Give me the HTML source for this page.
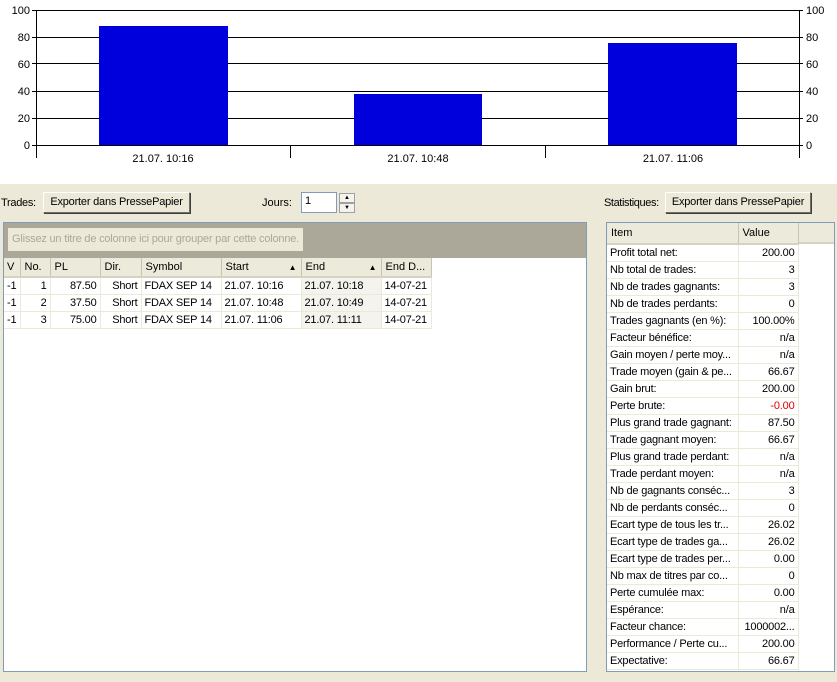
<!DOCTYPE html>
<html><head><meta charset="utf-8"><style>
*{margin:0;padding:0;box-sizing:border-box}
body{width:837px;height:682px;background:#ece9d8;font-family:"Liberation Sans",sans-serif;font-size:11px;color:#000;position:relative;overflow:hidden}
.a{position:absolute;white-space:nowrap}
.btn{position:absolute;height:21px;border-top:1px solid #fff;border-left:1px solid #fff;border-right:1px solid #716f64;border-bottom:1px solid #716f64;box-shadow:1px 1px 0 #404040;background:#ece9d8;text-align:center;line-height:18px;font-size:11px;letter-spacing:-0.2px}
table{border-collapse:collapse;position:absolute;table-layout:fixed}
td{height:17px;border-right:1px solid #ece9d8;border-bottom:1px solid #ece9d8;padding:0 3px;overflow:hidden;white-space:nowrap;line-height:16px;letter-spacing:-0.2px}
th{height:19px;font-weight:normal;text-align:left;padding:0 4px;background:#ebeadb;border-bottom:2px solid #d6d2c2;border-right:1px solid #c7c5b2;line-height:17px;white-space:nowrap}
.r{text-align:right}
</style></head><body>
<svg class="a" style="left:0;top:0" width="837" height="184">
<rect width="837" height="184" fill="#fff"/>
<g stroke="#000" stroke-width="1">
<line x1="32" y1="10.5" x2="803" y2="10.5"/><line x1="32" y1="37.5" x2="803" y2="37.5"/><line x1="32" y1="63.5" x2="803" y2="63.5"/><line x1="32" y1="91.5" x2="803" y2="91.5"/><line x1="32" y1="118.5" x2="803" y2="118.5"/><line x1="32" y1="145.5" x2="803" y2="145.5"/>
<line x1="36.5" y1="10" x2="36.5" y2="158"/><line x1="799.5" y1="10" x2="799.5" y2="158"/>
<line x1="290.5" y1="145" x2="290.5" y2="158"/><line x1="545.5" y1="145" x2="545.5" y2="158"/>
</g>
<rect x="99" y="26" width="129" height="119" fill="#0000dd"/>
<rect x="354" y="94" width="128" height="51" fill="#0000dd"/>
<rect x="608" y="43" width="129" height="102" fill="#0000dd"/>
<g font-family="Liberation Sans" font-size="11" text-anchor="end">
<text x="30" y="14">100</text><text x="30" y="41">80</text><text x="30" y="68">60</text><text x="30" y="95">40</text><text x="30" y="122">20</text><text x="30" y="149">0</text>
</g>
<g font-family="Liberation Sans" font-size="11">
<text x="806" y="14">100</text><text x="806" y="41">80</text><text x="806" y="68">60</text><text x="806" y="95">40</text><text x="806" y="122">20</text><text x="806" y="149">0</text>
</g>
<g font-family="Liberation Sans" font-size="11" text-anchor="middle">
<text x="163" y="162">21.07. 10:16</text><text x="418" y="162">21.07. 10:48</text><text x="673" y="162">21.07. 11:06</text>
</g>
</svg>
<div class="a" style="left:1px;top:197px;letter-spacing:-0.3px">Trades:</div>
<div class="btn" style="left:43px;top:192px;width:147px">Exporter dans PressePapier</div>
<div class="a" style="left:262px;top:197px">Jours:</div>
<div class="a" style="left:301px;top:192px;width:36px;height:21px;background:#fff;border:1px solid #7f9db9;padding:2px 3px">1</div>
<div class="a" style="left:339px;top:193px;width:16px;height:10px;border:1px solid #a0a0a0;background:#f4f3ee;font-size:6px;text-align:center;line-height:8px">▲</div>
<div class="a" style="left:339px;top:203px;width:16px;height:10px;border:1px solid #a0a0a0;background:#f4f3ee;font-size:6px;text-align:center;line-height:8px">▼</div>
<div class="a" style="left:604px;top:197px;letter-spacing:-0.4px">Statistiques:</div>
<div class="btn" style="left:665px;top:192px;width:146px">Exporter dans PressePapier</div>

<div class="a" style="left:3px;top:222px;width:584px;height:450px;background:#fff;border:1px solid #7f9db9">
<div style="height:35px;background:#aca899;padding:5px 4px"><div style="display:inline-block;background:#ece9d8;color:#aca899;padding:2px 4px;height:23px;line-height:19px;letter-spacing:-0.2px">Glissez un titre de colonne ici pour grouper par cette colonne.</div></div>
<table style="left:0;top:35px;width:427px">
<colgroup><col style="width:16px"><col style="width:30px"><col style="width:50px"><col style="width:41px"><col style="width:80px"><col style="width:80px"><col style="width:80px"><col style="width:50px"></colgroup>
<tr><th style="padding:0 3px">V</th><th>No.</th><th>PL</th><th>Dir.</th><th>Symbol</th><th>Start<span style="float:right;font-size:8px">▲</span></th><th>End<span style="float:right;font-size:8px">▲</span></th><th>End D...</th></tr>
<tr><td>-1</td><td class="r">1</td><td class="r">87.50</td><td class="r">Short</td><td>FDAX SEP 14</td><td>21.07. 10:16</td><td style="background:#f4f3ee">21.07. 10:18</td><td>14-07-21</td></tr>
<tr><td>-1</td><td class="r">2</td><td class="r">37.50</td><td class="r">Short</td><td>FDAX SEP 14</td><td>21.07. 10:48</td><td style="background:#f4f3ee">21.07. 10:49</td><td>14-07-21</td></tr>
<tr><td>-1</td><td class="r">3</td><td class="r">75.00</td><td class="r">Short</td><td>FDAX SEP 14</td><td>21.07. 11:06</td><td style="background:#f4f3ee">21.07. 11:11</td><td>14-07-21</td></tr>
</table>
</div>

<div class="a" style="left:606px;top:222px;width:229px;height:450px;background:#fff;border:1px solid #7f9db9">
<div style="position:absolute;left:0;top:0;width:227px;height:21px;background:#ebeadb;border-bottom:2px solid #d6d2c2"></div>
<table style="left:0;top:0;width:191px">
<colgroup><col style="width:131px"><col style="width:60px"></colgroup>
<tr><th style="height:21px">Item</th><th style="height:21px">Value</th></tr>
<tr><td>Profit total net:</td><td class="r">200.00</td></tr>
<tr><td>Nb total de trades:</td><td class="r">3</td></tr>
<tr><td>Nb de trades gagnants:</td><td class="r">3</td></tr>
<tr><td>Nb de trades perdants:</td><td class="r">0</td></tr>
<tr><td>Trades gagnants (en %):</td><td class="r">100.00%</td></tr>
<tr><td>Facteur bénéfice:</td><td class="r">n/a</td></tr>
<tr><td>Gain moyen / perte moy...</td><td class="r">n/a</td></tr>
<tr><td>Trade moyen (gain &amp; pe...</td><td class="r">66.67</td></tr>
<tr><td>Gain brut:</td><td class="r">200.00</td></tr>
<tr><td>Perte brute:</td><td class="r" style="color:#e00000">-0.00</td></tr>
<tr><td>Plus grand trade gagnant:</td><td class="r">87.50</td></tr>
<tr><td>Trade gagnant moyen:</td><td class="r">66.67</td></tr>
<tr><td>Plus grand trade perdant:</td><td class="r">n/a</td></tr>
<tr><td>Trade perdant moyen:</td><td class="r">n/a</td></tr>
<tr><td>Nb de gagnants conséc...</td><td class="r">3</td></tr>
<tr><td>Nb de perdants conséc...</td><td class="r">0</td></tr>
<tr><td>Ecart type de tous les tr...</td><td class="r">26.02</td></tr>
<tr><td>Ecart type de trades ga...</td><td class="r">26.02</td></tr>
<tr><td>Ecart type de trades per...</td><td class="r">0.00</td></tr>
<tr><td>Nb max de titres par co...</td><td class="r">0</td></tr>
<tr><td>Perte cumulée max:</td><td class="r">0.00</td></tr>
<tr><td>Espérance:</td><td class="r">n/a</td></tr>
<tr><td>Facteur chance:</td><td class="r">1000002...</td></tr>
<tr><td>Performance / Perte cu...</td><td class="r">200.00</td></tr>
<tr><td>Expectative:</td><td class="r">66.67</td></tr>
</table>
</div>
</body></html>
